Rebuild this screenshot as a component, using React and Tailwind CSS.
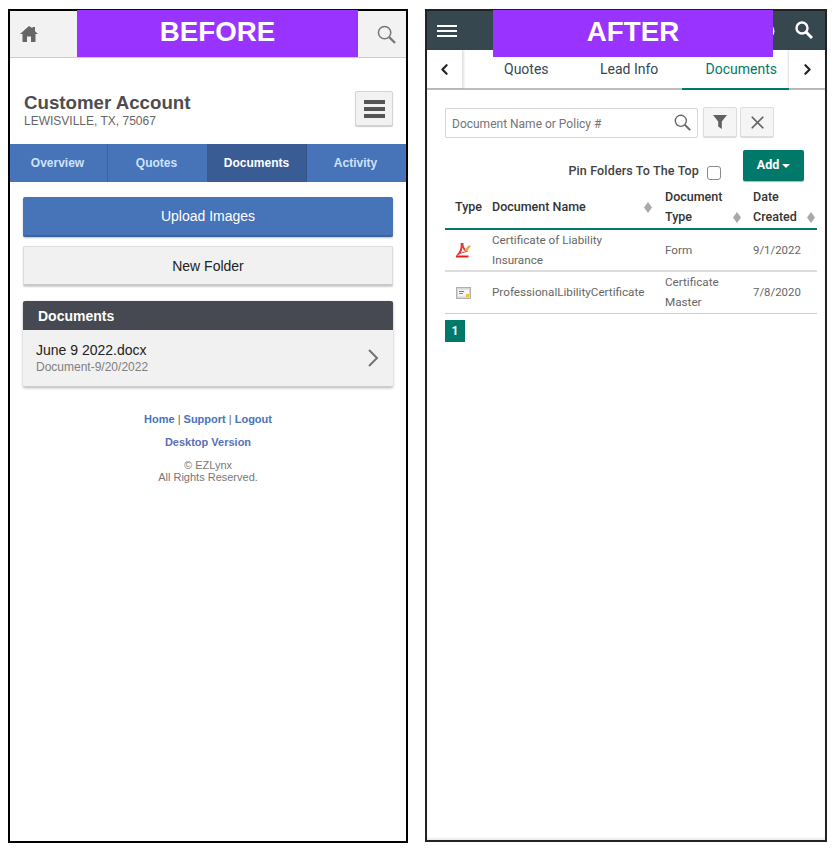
import React from 'react'
import { ChevronLeft, ChevronRight, X } from 'lucide-react'

const Banner = ({ children, className }) => (
  <div className={`absolute -top-px h-[47px] pb-[3px] bg-[#9933ff] text-white text-[27.7px] font-bold font-['Liberation_Sans',sans-serif] flex items-center justify-center ${className}`}>
    {children}
  </div>
)

const Magnifier = ({ color, size = 20, width = 2 }) => (
  <svg width={size} height={size} viewBox="0 0 20 20" fill="none" stroke={color}>
    <circle cx="8" cy="8" r="6.5" strokeWidth={width} />
    <path d="M12.8 12.8L19 19" strokeWidth={width + 0.8} />
  </svg>
)

const Before = () => (
  <div className="relative w-[400px] h-[834px] border-2 border-black bg-white font-['Liberation_Sans',sans-serif]">
    <div className="h-[47px] bg-[#f2f2f2] border-b border-[#cccccc] flex items-center justify-between pl-[10px] pr-[10px]">
      <svg width="18" height="16" viewBox="0 0 18 16" fill="#666666" className="mt-[-1px]">
        <path d="M9 0L0 8h2.5v8H7v-5.500h4V16h4.500V8H18l-3-2.700V1h-2.500v1.200z" />
      </svg>
      <Magnifier color="#777777" size={19} width={1.6} />
    </div>
    <Banner className="left-[67px] w-[281px]">BEFORE</Banner>

    <div className="h-[86px] flex items-start justify-between pl-[14px] pr-[13px]">
      <div className="pt-[33px]">
        <h1 className="text-[18.7px] leading-[24px] font-bold text-[#4d4d4d]">Customer Account</h1>
        <p className="text-[12px] leading-[13px] text-[#666666]">LEWISVILLE, TX, 75067</p>
      </div>
      <button className="mt-[33px] w-[38px] h-[35px] bg-[#f2f2f2] border border-[#d4d4d4] rounded-[2px] shadow-[0_1px_1px_rgba(0,0,0,0.2)] flex flex-col items-center justify-center gap-[3px]">
        <span className="w-[21px] h-[4px] bg-[#555555]" />
        <span className="w-[21px] h-[4px] bg-[#555555]" />
        <span className="w-[21px] h-[4px] bg-[#555555]" />
      </button>
    </div>

    <div className="h-[38px] bg-[#4773b9] flex text-[12px] font-bold text-[#cfe2fb]">
      <div className="w-[98px] pr-[2px] border-r border-[#3d659f] flex items-center justify-center">Overview</div>
      <div className="w-[99px] pr-[2px] flex items-center justify-center">Quotes</div>
      <div className="w-[100px] bg-[#3a5c94] border-r border-[#355586] text-white flex items-center justify-center">Documents</div>
      <div className="w-[99px] pr-[2px] flex items-center justify-center">Activity</div>
    </div>

    <div className="pt-[15px] px-[13px]">
      <button className="w-full h-[40px] bg-[#4773b9] border-b-2 border-[#3a639f] rounded-[2px] shadow-[0_1px_2px_rgba(0,0,0,0.25)] text-white text-[14px]">
        Upload Images
      </button>
      <button className="w-full h-[40px] mt-[9px] pt-[1px] bg-[#f1f1f1] border border-[#dddddd] border-b-2 border-b-[#c9c9c9] rounded-[2px] shadow-[0_1px_2px_rgba(0,0,0,0.2)] text-[#222222] text-[14px]">
        New Folder
      </button>

      <div className="mt-[15px] rounded-[2px] shadow-[0_1px_3px_rgba(0,0,0,0.3)]">
        <div className="h-[29px] pt-[1px] bg-[#474952] rounded-t-[2px] text-white text-[14px] font-bold flex items-center pl-[15px]">Documents</div>
        <div className="h-[57px] bg-[#f1f1f1] border-b border-[#cccccc] flex items-center justify-between pl-[13px] pr-[14px]">
          <div>
            <div className="text-[14px] leading-[18px] text-[#222222]">June 9 2022.docx</div>
            <div className="text-[12px] leading-[16px] text-[#808080]">Document-9/20/2022</div>
          </div>
          <svg width="12" height="18" viewBox="0 0 12 18" fill="none" stroke="#737373" strokeWidth="2"><path d="M2 1l8 8-8 8" /></svg>
        </div>
      </div>
    </div>

    <div className="mt-[26px] text-center text-[11px] text-[#777777]">
      <div className="leading-[13px] font-bold text-[#4773b9]">
        Home <span className="font-normal text-[#666666]">|</span> Support <span className="font-normal text-[#666666]">|</span> Logout
      </div>
      <div className="mt-[10px] leading-[13px] font-bold text-[#5a6fb5]">Desktop Version</div>
      <div className="mt-[10px] leading-[12px]">© EZLynx<br />All Rights Reserved.</div>
    </div>
  </div>
)

const PdfIcon = () => (
  <svg width="15" height="16" viewBox="0 0 15 16" fill="none">
    <path d="M0 13.500h12.500V15.500H0z" fill="#e01f1f" />
    <path d="M4.500 1h3c-.3 3 1 5.500 4 7.500v1.500c-3 0-6.500 1.200-10 3.500H0C3.500 10.500 5.300 6 4.500 1z" fill="#e23a3a" />
    <path d="M6.500 5.500c.5 1.500 1.500 3 3 4-1.500.2-3 .7-4.500 1.300.7-1.500 1.200-3.300 1.500-5.300z" fill="#fbeeee" />
    <path d="M8.500 8l4.500-5 1.800 1.500-4.300 5.200z" fill="#e3aa55" />
  </svg>
)

const CertIcon = () => (
  <svg width="15" height="12" viewBox="0 0 15 12">
    <rect x="0.5" y="0.5" width="14" height="11" fill="#d6d6d6" stroke="#b0b0b0" />
    <rect x="2" y="2.500" width="11" height="7" fill="#f4f4f4" />
    <rect x="3" y="4" width="5" height="1" fill="#777777" />
    <rect x="3" y="6" width="4" height="1" fill="#888888" />
    <rect x="10" y="7" width="3" height="3" fill="#e8c53a" />
  </svg>
)

const SortMark = () => (
  <svg width="8" height="11" viewBox="0 0 8 11" className="shrink-0"><path d="M4 0l4 5.500-4 5.500-4-5.500z" fill="#a9a9a9" /></svg>
)

const After = () => (
  <div className="relative w-[402px] h-[833px] border-2 border-[#222222] bg-white font-['Roboto',sans-serif] shadow-[inset_0_-2px_2px_rgba(0,0,0,0.08)]">
    <div className="h-[39px] bg-[#37474f] flex items-center pl-[10px] pr-[12px] text-white">
      <div className="flex flex-col gap-[3px]">
        <span className="w-[20px] h-[2px] bg-white" />
        <span className="w-[20px] h-[2px] bg-white" />
        <span className="w-[20px] h-[2px] bg-white" />
      </div>
      <svg width="16" height="16" viewBox="0 0 16 16" fill="none" stroke="white" strokeWidth="2" className="ml-auto mr-[20px]">
        <circle cx="8" cy="8" r="6.500" />
      </svg>
      <svg width="18" height="18" viewBox="0 0 18 18" fill="none" stroke="white" className="mt-[-2px]">
        <circle cx="7" cy="7" r="5.500" strokeWidth="2.400" />
        <path d="M11 11l6 6" strokeWidth="3" />
      </svg>
    </div>
    <Banner className="left-[66px] w-[280px]">AFTER</Banner>

    <div className="h-[40px] flex border-b-2 border-[#bdbdbd] text-[14px] text-[#37474f] whitespace-nowrap">
      <div className="w-[36px] border-r border-[#e3e3e3] shadow-[1px_0_2px_rgba(0,0,0,0.12)] flex items-center justify-center">
        <ChevronLeft className="w-[17px] h-[17px] text-[#222222]" strokeWidth={3} />
      </div>
      <div className="w-[137px] pl-[41px] flex items-center">Quotes</div>
      <div className="w-[82px] flex items-center">Lead Info</div>
      <div className="w-[107px] h-[40px] border-b-2 border-[#00796b] text-[#00796b] flex items-center justify-end pr-[12px]">
        Documents
      </div>
      <div className="flex-1 shadow-[-1px_0_2px_rgba(0,0,0,0.12)] flex items-center justify-center">
        <ChevronRight className="w-[17px] h-[17px] text-[#222222]" strokeWidth={3} />
      </div>
    </div>

    <div className="pl-[18px] pr-[8px]">
      <div className="mt-[17px] flex items-start gap-[5px]">
        <div className="w-[253px] h-[30px] mt-[1px] border border-[#d5d5d5] rounded-[2px] flex items-center justify-between pl-[6px] pr-[6px]">
          <span className="text-[12px] text-[#757575] pt-[2px]">Document Name or Policy #</span>
          <span className="mb-[2px]"><Magnifier color="#666666" size={17} width={1.6} /></span>
        </div>
        <button className="w-[34px] h-[30px] bg-[#f5f5f5] border border-[#dddddd] rounded-[2px] shadow-[0_1px_1px_rgba(0,0,0,0.15)] flex items-center justify-center">
          <svg width="14" height="14" viewBox="0 0 14 14" fill="#616161"><path d="M0 0h14L8.800 6.500V14L5.200 11.500V6.500z" /></svg>
        </button>
        <button className="w-[34px] h-[30px] -ml-[2px] bg-[#f5f5f5] border border-[#dddddd] rounded-[2px] shadow-[0_1px_1px_rgba(0,0,0,0.15)] flex items-center justify-center">
          <X className="w-[21px] h-[21px] text-[#616161]" strokeWidth={2} />
        </button>
      </div>

      <div className="mt-[12px] flex items-center justify-end pr-[13px] h-[31px]">
        <span className="text-[12.5px] font-medium text-[#424242] tracking-[0.15px] mt-[11px]">Pin Folders To The Top</span>
        <span className="w-[14px] h-[14px] ml-[8px] mt-[14px] border border-[#8a8a8a] rounded-[3px]" />
        <button className="ml-[22px] w-[61px] h-[31px] bg-[#00796b] rounded-[2px] shadow-[0_1px_1px_rgba(0,0,0,0.3)] text-white text-[12.5px] font-bold flex items-center justify-center gap-[3px]">
          Add
          <span className="w-0 h-0 border-x-[4px] border-x-transparent border-t-[4px] border-t-white" />
        </button>
      </div>

      <table className="mt-[6px] w-[372px] table-fixed border-collapse text-[12.5px]">
        <colgroup>
          <col className="w-[37px]" />
          <col className="w-[172px]" />
          <col className="w-[88px]" />
          <col className="w-[75px]" />
        </colgroup>
        <thead>
          <tr className="h-[41px] border-b-2 border-[#00796b] text-[#333333] font-medium leading-[20px]">
            <th className="pl-[10px] pb-[1px] text-left font-medium">Type</th>
            <th className="pl-[10px] pr-[2px] pb-[1px] text-left font-medium">
              <div className="flex items-center justify-between"><span>Document Name</span><SortMark /></div>
            </th>
            <th className="pl-[11px] pr-[1px] pb-[1px] text-left font-medium">
              <div>Document</div>
              <div className="flex items-center justify-between"><span>Type</span><SortMark /></div>
            </th>
            <th className="pl-[11px] pr-[2px] pb-[1px] text-left font-medium">
              <div>Date</div>
              <div className="flex items-center justify-between"><span>Created</span><SortMark /></div>
            </th>
          </tr>
        </thead>
        <tbody className="text-[#666666] leading-[20px] text-[11.7px]">
          <tr className="h-[42px] border-b-2 border-[#dddddd]">
            <td className="pl-[11px]"><PdfIcon /></td>
            <td className="pl-[10px]">Certificate of Liability<br />Insurance</td>
            <td className="pl-[11px]">Form</td>
            <td className="pl-[11px] text-[11.4px]">9/1/2022</td>
          </tr>
          <tr className="h-[41px] border-b border-[#cccccc]">
            <td className="pl-[11px]"><CertIcon /></td>
            <td className="pl-[10px] pb-[1px] whitespace-nowrap">ProfessionalLibilityCertificate</td>
            <td className="pl-[11px] pb-[1px]">Certificate<br />Master</td>
            <td className="pl-[11px] pb-[1px] text-[11.4px]">7/8/2020</td>
          </tr>
        </tbody>
      </table>

      <div className="mt-[6px] w-[20px] h-[22px] bg-[#00796b] text-white text-[12px] font-bold flex items-center justify-center">1</div>
    </div>
  </div>
)

export default function App() {
  return (
    <div className="w-[840px] h-[851px] bg-white flex items-start gap-[17px] pl-[8px] pt-[9px]">
      <Before />
      <After />
    </div>
  )
}
